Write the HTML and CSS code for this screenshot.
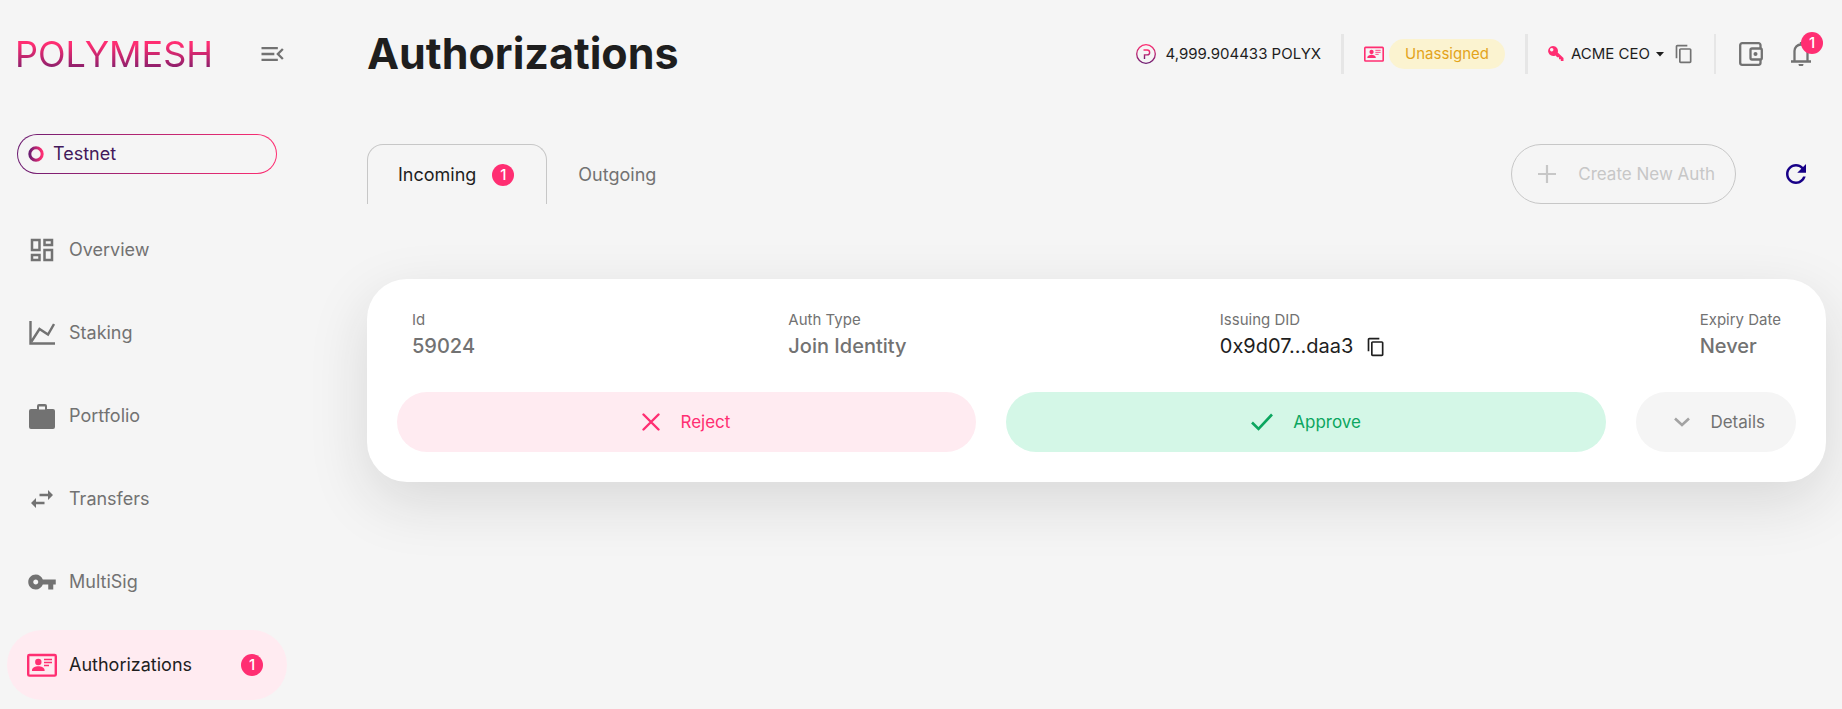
FILE: index.html
```html
<!DOCTYPE html>
<html lang="en">
<head>
<meta charset="utf-8">
<meta name="viewport" content="width=device-width, initial-scale=1">
<title>Authorizations - Polymesh</title>
<link rel="stylesheet" href="styles.css">
</head>
<body>
<svg class="defs" aria-hidden="true">
  <defs>
    <linearGradient id="brand-v" x1="0" y1="0" x2="0" y2="1"><stop offset="0" stop-color="#ff2e72"/><stop offset="1" stop-color="#6d1d72"/></linearGradient>
    <linearGradient id="brand-h" x1="0" y1="0" x2="1" y2="0"><stop offset="0" stop-color="#6d1d72"/><stop offset="1" stop-color="#ff2e72"/></linearGradient>
    <symbol id="copy" viewBox="0 0 24 24"><path fill="currentColor" d="M16 1H4c-1.100 0-2 .9-2 2v14h2V3h12V1zm3 4H8c-1.100 0-2 .9-2 2v14c0 1.100.9 2 2 2h11c1.100 0 2-.9 2-2V7c0-1.100-.9-2-2-2zm0 16H8V7h11v14z"/></symbol>
    <symbol id="id-card" viewBox="0 0 30 24"><rect x="1.200" y="2" width="27.600" height="20.600" rx="1.200" fill="none" stroke="currentColor" stroke-width="2.400"/><circle cx="11.300" cy="9" r="3.200" fill="currentColor"/><path fill="currentColor" d="M5 18v-1c0-2.300 3.500-3.700 6.300-3.700s6.300 1.400 6.300 3.700v1z"/><path stroke="currentColor" stroke-width="1.300" d="M17 6.500h8M17 9.500h8M17 12.500h5"/></symbol>
  </defs>
</svg>
<div class="app">
  <aside class="sidebar">
    <div class="brand">
      <a class="logo" href="#">POLYMESH</a>
      <button class="icon-button" type="button" aria-label="Collapse menu">
        <svg width="28" height="28" viewBox="0 0 24 24"><path fill="currentColor" d="M3 18h14v-2H3v2zm0-5h11v-2H3v2zm0-7v2h14V6H3zm19 9.600L18.400 12 22 8.400 20.600 7l-5 5 5 5 1.400-1.400z"/></svg>
      </button>
    </div>
    <div class="network">
      <svg width="16" height="16" viewBox="0 0 16 16"><circle cx="8" cy="8" r="6.200" fill="none" stroke="url(#brand-h)" stroke-width="3"/></svg>
      <span>Testnet</span>
    </div>
    <nav class="nav">
      <a class="nav-item" href="#"><span class="nav-icon"><svg width="30" height="30" viewBox="0 0 24 24"><path fill="currentColor" d="M19 5v2h-4V5h4M9 5v6H5V5h4m10 8v6h-4v-6h4M9 17v2H5v-2h4M21 3h-8v6h8V3zM11 3H3v10h8V3zm10 8h-8v10h8V11zm-10 4H3v6h8v-6z"/></svg></span><span>Overview</span></a>
      <a class="nav-item" href="#"><span class="nav-icon"><svg width="26" height="24" viewBox="0 0 26 24"><path fill="none" stroke="currentColor" stroke-width="2.400" d="M1.500 0v22.500H26M2.500 20.500L10.500 8l8.500 5.500L25 3"/></svg></span><span>Staking</span></a>
      <a class="nav-item" href="#"><span class="nav-icon"><svg width="26" height="25" viewBox="0 0 26 25"><path fill="currentColor" fill-rule="evenodd" d="M10 0h6a2 2 0 0 1 2 2v3h6a2 2 0 0 1 2 2v16a2 2 0 0 1-2 2H2a2 2 0 0 1-2-2V7a2 2 0 0 1 2-2h6V2a2 2 0 0 1 2-2zm0 2.500V5.500h6V2.500z"/></svg></span><span>Portfolio</span></a>
      <a class="nav-item" href="#"><span class="nav-icon"><svg width="22" height="18" viewBox="0 0 22 18"><path fill="none" stroke="currentColor" stroke-width="2.400" d="M8.500 5H18M13.500 13H4"/><path fill="currentColor" d="M17 0l5 5-5 5zM5 8l-5 5 5 5z"/></svg></span><span>Transfers</span></a>
      <a class="nav-item" href="#"><span class="nav-icon"><svg width="30" height="30" viewBox="0 0 24 24"><path fill="currentColor" d="M12.650 10C11.830 7.670 9.610 6 7 6c-3.310 0-6 2.690-6 6s2.690 6 6 6c2.610 0 4.830-1.670 5.650-4H17v4h4v-4h2v-4H12.650zM7 14c-1.100 0-2-.9-2-2s.9-2 2-2 2 .9 2 2-.9 2-2 2z"/></svg></span><span>MultiSig</span></a>
      <a class="nav-item active" href="#" aria-current="page"><span class="nav-icon"><svg width="30" height="24"><use href="#id-card"/></svg></span><span>Authorizations</span><span class="badge">1</span></a>
    </nav>
  </aside>
  <main class="main">
    <header class="header">
      <h1>Authorizations</h1>
      <div class="status">
        <div class="status-group balance">
          <svg width="20" height="20" viewBox="0 0 20 20"><g fill="none" stroke="url(#brand-v)"><circle cx="10" cy="10" r="9.300" stroke-width="1.300"/><path stroke-width="1.400" d="M7.500 6h3.700a2.400 2.400 0 0 1 0 4.900H8.500v4"/></g></svg>
          <span>4,999.904433 POLYX</span>
        </div>
        <div class="status-group identity">
          <svg class="pink" width="20" height="16"><use href="#id-card"/></svg>
          <span class="tag">Unassigned</span>
        </div>
        <div class="status-group account">
          <svg class="pink" width="16" height="16" viewBox="0 0 16 16"><path fill="currentColor" fill-rule="evenodd" d="M5 0a5 5 0 0 1 4.700 6.600L15.500 12v3h-2.700v-1.800H11v-2H9.200L7.500 9.400A5 5 0 1 1 5 0zM3.700 2a1.700 1.700 0 1 0 .01 0z"/></svg>
          <button class="account-select" type="button">ACME CEO <svg width="8" height="5" viewBox="0 0 8 5"><path fill="currentColor" d="M0 0h8L4 4.500z"/></svg></button>
          <button class="icon-button copy-account" type="button" aria-label="Copy address"><svg width="20" height="20"><use href="#copy"/></svg></button>
        </div>
        <div class="status-group tools">
          <button class="icon-button" type="button" aria-label="Wallet"><svg width="24" height="24" viewBox="0 0 24 24"><g fill="none" stroke="currentColor" stroke-width="2.300"><path d="M21.500 6V3.200a2 2 0 0 0-2-2H3.200a2 2 0 0 0-2 2v17.600a2 2 0 0 0 2 2h16.300a2 2 0 0 0 2-2v-3"/><rect x="11.500" y="6.500" width="11.300" height="11" rx="1.500"/></g><circle cx="16.500" cy="12" r="2" fill="currentColor"/></svg></button>
          <button class="icon-button bell" type="button" aria-label="Notifications"><svg width="20" height="24" viewBox="0 0 20 24"><path fill="none" stroke="currentColor" stroke-width="2.300" d="M0 19.500h20M3.500 19.500V9a6.500 6.500 0 0 1 13 0v10.500M10 3V0"/><path fill="currentColor" d="M7.500 22h5a2.500 2.500 0 0 1-5 0z"/></svg><span class="badge">1</span></button>
        </div>
      </div>
    </header>
    <div class="toolbar">
      <div class="tabs" role="tablist">
        <button class="tab selected" role="tab" aria-selected="true" type="button">Incoming <span class="badge">1</span></button>
        <button class="tab" role="tab" aria-selected="false" type="button">Outgoing</button>
      </div>
      <div class="toolbar-actions">
        <button class="pill-button create" type="button" disabled><svg width="18" height="18" viewBox="0 0 18 18"><path stroke="currentColor" stroke-width="2.200" d="M9 0v18M0 9h18"/></svg>Create New Auth</button>
        <button class="icon-button refresh" type="button" aria-label="Refresh"><svg width="30" height="30" viewBox="0 0 24 24"><path fill="currentColor" d="M17.650 6.350C16.200 4.900 14.210 4 12 4c-4.420 0-7.990 3.580-7.990 8s3.570 8 7.990 8c3.730 0 6.840-2.550 7.730-6h-2.080c-.82 2.330-3.040 4-5.650 4-3.310 0-6-2.690-6-6s2.690-6 6-6c1.660 0 3.140.69 4.220 1.780L13 11h7V4l-2.350 2.350z"/></svg></button>
      </div>
    </div>
    <section class="card">
      <dl class="fields">
        <div><dt>Id</dt><dd>59024</dd></div>
        <div><dt>Auth Type</dt><dd>Join Identity</dd></div>
        <div><dt>Issuing DID</dt><dd class="did">0x9d07...daa3 <button class="icon-button" type="button" aria-label="Copy DID"><svg width="20" height="20"><use href="#copy"/></svg></button></dd></div>
        <div><dt>Expiry Date</dt><dd>Never</dd></div>
      </dl>
      <div class="actions">
        <button class="pill-button grow reject" type="button"><svg width="18" height="18" viewBox="0 0 18 18"><path stroke="currentColor" stroke-width="2.400" stroke-linecap="round" d="M1.500 1.500l15 15M16.500 1.500l-15 15"/></svg>Reject</button>
        <button class="pill-button grow approve" type="button"><svg width="22" height="18" viewBox="0 0 22 18"><path fill="none" stroke="currentColor" stroke-width="2.600" d="M1 9.500l6.500 6.500L21 1.500"/></svg>Approve</button>
        <button class="pill-button details" type="button"><svg width="16" height="10" viewBox="0 0 16 10"><path fill="none" stroke="#a3a3a3" stroke-width="2.600" d="M1 1.500l7 6.500 7-6.500"/></svg>Details</button>
      </div>
    </section>
  </main>
</div>
</body>
</html>
```
FILE: styles.css
```css
:root {
  --bg: #f5f5f5;
  --pink: #ff2e72;
  --pink-soft: #ffebf1;
  --ink: #1e1e1e;
  --grey: #727272;
}

* { box-sizing: border-box; }

body {
  margin: 0;
  background: var(--bg);
  color: var(--ink);
  font-family: Inter, "Noto Sans", sans-serif;
  font-size: 16px;
  line-height: 24px;
}

button {
  padding: 0;
  border: 0;
  background: none;
  color: inherit;
  font: inherit;
  cursor: pointer;
}

a { color: inherit; text-decoration: none; }
svg { display: block; flex: none; }
.defs { position: absolute; width: 0; height: 0; }
.pink { color: var(--pink); }

.app { display: flex; min-height: 100vh; }

.sidebar {
  flex: none;
  width: 294px;
  padding: 34px 7px 10px;
}

.brand {
  display: flex;
  align-items: center;
  justify-content: space-between;
  height: 40px;
  padding: 0 1px 0 8px;
}

.logo {
  background: linear-gradient(#ff2e72 25%, #8a1f6c 85%);
  background-clip: text;
  color: transparent;
  font-size: 36px;
  line-height: 40px;
}

.icon-button { display: inline-flex; color: var(--grey); }

.network {
  display: flex;
  align-items: center;
  gap: 9px;
  height: 40px;
  margin: 60px 10px 41px;
  padding: 0 10px;
  border: 1px solid transparent;
  border-radius: 20px;
  background:
    linear-gradient(var(--bg), var(--bg)) padding-box,
    linear-gradient(90deg, #6d1d72, #ff2e72) border-box;
  color: #43195b;
  font-size: 18px;
}

.nav { display: flex; flex-direction: column; gap: 13px; }

.nav-item {
  display: flex;
  align-items: center;
  gap: 12px;
  height: 70px;
  padding: 0 24px 0 20px;
  border-radius: 35px;
  color: var(--grey);
  font-size: 18px;
}
.nav-item.active { background: var(--pink-soft); color: var(--ink); }
.nav-item .badge { margin-left: auto; }
.nav-icon { display: flex; justify-content: center; width: 30px; }
.active .nav-icon { color: var(--pink); }

.badge {
  display: inline-flex;
  align-items: center;
  justify-content: center;
  width: 22px;
  height: 22px;
  border-radius: 50%;
  background: var(--pink);
  color: #fff;
  font-size: 15px;
  font-weight: 500;
  line-height: 22px;
}

.main { flex: 1; min-width: 0; padding: 24px 16px 24px 73px; }

.header {
  display: flex;
  align-items: center;
  justify-content: space-between;
  height: 60px;
}

h1 { margin: 0; padding-bottom: 2px; font-size: 43px; line-height: 58px; font-weight: 700; }

.status { display: flex; align-items: center; font-size: 15px; }
.status-group {
  display: flex;
  align-items: center;
  height: 40px;
  padding: 0 20px;
}
.status-group + .status-group { border-left: 3px solid #e6e6e6; }
.balance { gap: 10px; }
.identity { gap: 5px; }
.account { gap: 7px; }
.status .tools { gap: 28px; padding: 0 15px 0 23px; border-left-width: 2px; }

.tag {
  padding: 3px 16px;
  border-radius: 15px;
  background: #fbf3d0;
  color: #e3a31b;
}

.account-select { display: inline-flex; align-items: center; gap: 6px; }
.copy-account { margin-left: 3px; }

.bell { position: relative; }
.bell .badge { position: absolute; top: -10px; left: 10px; }

.toolbar {
  display: flex;
  justify-content: space-between;
  margin-top: 60px;
}
.tabs, .toolbar-actions { display: flex; align-items: center; }
.tab {
  display: flex;
  align-items: center;
  gap: 16px;
  height: 60px;
  padding: 0 30px;
  border: 1px solid transparent;
  border-bottom: 0;
  border-radius: 16px 16px 0 0;
  color: var(--grey);
  font-size: 18px;
}
.tab.selected { padding: 0 32px 0 30px; border-color: #c7c7c7; color: var(--ink); }
.toolbar-actions { gap: 45px; padding-right: 15px; }

.pill-button {
  display: flex;
  align-items: center;
  justify-content: center;
  gap: 20px;
  height: 60px;
  border-radius: 30px;
  font-size: 17px;
}
.create {
  gap: 22px;
  padding: 0 20px 0 26px;
  border: 1px solid #c7c7c7;
  color: #c7c7c7;
}
.refresh { color: #170087; }

.card {
  margin-top: 75px;
  padding: 30px;
  border-radius: 40px;
  background: #fff;
  box-shadow: 0 20px 60px rgba(30, 30, 30, 0.13);
}

.fields {
  display: flex;
  justify-content: space-between;
  gap: 20px;
  margin: 0 0 30px;
  padding: 0 15px;
  color: var(--grey);
}
dt { font-size: 15px; line-height: 22px; }
dd { margin: 0; font-size: 20px; font-weight: 500; line-height: 31px; }
.did { display: flex; align-items: center; gap: 13px; color: var(--ink); font-weight: 400; }
.did .icon-button { color: var(--ink); }

.actions { display: flex; gap: 30px; }
.grow { flex: 1 1 auto; }
.reject { background: var(--pink-soft); color: var(--pink); }
.approve { background: #d4f7e7; color: #0ba65f; }
.details { padding: 0 31px 0 38px; background: var(--bg); color: var(--grey); }
```
